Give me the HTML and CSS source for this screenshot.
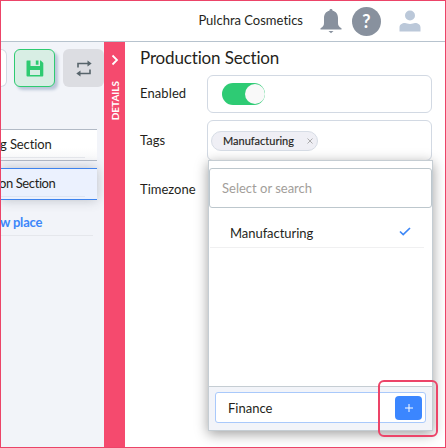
FILE: index.html
```html
<!DOCTYPE html>
<html lang="en">
<head>
    <meta charset="UTF-8">
    <meta name="viewport" content="width=device-width, initial-scale=1.0">
    <title>Production Section</title>
    <link rel="stylesheet" href="styles.css">
</head>
<body>
    <div class="app">
        <div class="header">
            <span class="company">Pulchra Cosmetics</span>
            <svg class="bell" width="22" height="26" viewBox="0 0 22 26">
                <path d="M11 1c1 0 1.600.700 1.600 1.700C16 3.400 18 6.200 18 10v5c0 2.600 1 3.800 3.500 5.200V21.500H.5v-1.300C3 18.800 4 17.600 4 15v-5C4 6.200 6 3.400 9.400 2.700 9.400 1.700 10 1 11 1z"/>
                <path d="M8.500 23h5L11 25.300z"/>
            </svg>
            <span class="help">?</span>
            <svg class="user" width="22" height="22" viewBox="0 0 22 22">
                <circle cx="11" cy="5.500" r="5"/>
                <path d="M.5 21.500v-4c0-3 2.500-4.500 5.500-4.500 1.500 0 2.500 1 5 1s3.500-1 5-1c3 0 5.500 1.500 5.500 4.500v4z"/>
            </svg>
        </div>
        <div class="main">
            <div class="sidebar">
                <div class="toolbar">
                    <div class="tool-edge"></div>
                    <button class="tool save">
                        <svg width="18" height="17" viewBox="0 0 18 17">
                            <path fill-rule="evenodd" d="M1 .5h3.500V6H14V.5h.8L17.300 3v12.500q0 1-1 1H1.500q-1 0-1-1V1.500q0-1 .5-1zM4 10v5h10v-5zM9.800 .5h2.700v4.200H9.800z"/>
                        </svg>
                    </button>
                    <button class="tool swap">
                        <svg width="16" height="17" viewBox="0 0 16 17">
                            <path class="line" d="M2 7.500V3.500h10.500M14 9.500v4H3.500"/>
                            <path d="M11.500 .5l4.200 3-4.200 3zM4.500 10.500l-4.200 3 4.200 3z"/>
                        </svg>
                    </button>
                </div>
                <div class="places">
                    <div class="place"><span>g Section</span></div>
                    <div class="place active"><span>on Section</span></div>
                    <div class="place new"><span>w place</span></div>
                </div>
            </div>
            <div class="details">
                <svg width="8" height="12" viewBox="0 0 8 12"><path d="M1.500 1.500L6 6l-4.500 4.500"/></svg>
                <span>DETAILS</span>
            </div>
            <div class="panel">
                <h2>Production Section</h2>
                <div class="field enabled">
                    <label>Enabled</label>
                    <div class="box"><div class="toggle"><div class="knob"></div></div></div>
                </div>
                <div class="field tags">
                    <label>Tags</label>
                    <div class="box">
                        <div class="tag">
                            <span>Manufacturing</span>
                            <svg width="6" height="6" viewBox="0 0 6 6"><path d="M.5 .5l5 5M5.500 .5l-5 5"/></svg>
                        </div>
                    </div>
                    <div class="dropdown">
                        <div class="search"><span>Select or search</span></div>
                        <div class="option">
                            <span>Manufacturing</span>
                            <svg width="12" height="9" viewBox="0 0 12 9"><path d="M1 4.500l3.200 3L11 1"/></svg>
                        </div>
                        <div class="add-bar">
                            <div class="add-input">
                                <span>Finance</span>
                                <button class="add">
                                    <svg width="8" height="8" viewBox="0 0 8 8"><path d="M4 0v8M0 4h8"/></svg>
                                </button>
                            </div>
                        </div>
                        <div class="highlight"></div>
                    </div>
                </div>
                <div class="field timezone">
                    <label>Timezone</label>
                </div>
            </div>
        </div>
    </div>
</body>
</html>
```
FILE: styles.css
```css
* {
    box-sizing: border-box;
}
body {
    margin: 0;
    font-family: Lato, sans-serif;
    font-size: 13px;
    font-variant-ligatures: none;
    color: #251f1b;
    background: white;
}
svg {
    display: block;
    flex: none;
}
button {
    padding: 0;
    border: none;
}
.app {
    display: flex;
    flex-direction: column;
    width: 446px;
    height: 448px;
    border: 1px solid #ec4468;
    overflow: hidden;
}
.header {
    display: flex;
    flex: none;
    align-items: center;
    justify-content: flex-end;
    height: 41px;
    padding-right: 24px;
    border-bottom: 1px solid #b7c3ce;
}
.company {
    margin: 0 17px 2px 0;
}
.bell {
    margin-right: 10px;
    fill: #88919e;
}
.help {
    width: 29px;
    height: 29px;
    margin-right: 18px;
    border-radius: 50%;
    background: #88919e;
    color: white;
    font-size: 18px;
    font-weight: bold;
    line-height: 29px;
    text-align: center;
}
.user {
    fill: #bbc8d9;
}
.main {
    display: flex;
    flex: 1;
}
.sidebar {
    width: 103px;
    background: #f2f4f9;
    overflow: hidden;
}
.toolbar {
    display: flex;
    padding-top: 7px;
}
.tool-edge {
    width: 6px;
    height: 38px;
    margin-right: 7px;
    border: 1px solid #d3d9e3;
    border-left: none;
    border-radius: 0 6px 6px 0;
    background: white;
}
.tool {
    display: flex;
    align-items: center;
    justify-content: center;
    width: 41px;
    height: 38px;
    border-radius: 6px;
}
.save {
    margin-right: 8px;
    border: 1px solid #2ecb71;
    background: #d8eee4;
    box-shadow: 3px 3px 3px #bac6d8;
    fill: #2ecb71;
}
.swap {
    background: #dcdde2;
    fill: #57646b;
}
.swap .line {
    fill: none;
    stroke: #57646b;
    stroke-width: 1.6;
}
.places {
    width: 96px;
    margin-top: 42px;
}
.place {
    height: 32px;
    margin-bottom: 7px;
    border: 1px solid #b2bac6;
    border-width: 1px 0;
    background: linear-gradient(white 60%, #f6f7f9);
    line-height: 28px;
    white-space: nowrap;
}
.place span {
    display: block;
    width: 84px;
    height: 28px;
    border-bottom: 1px solid #e5e7ec;
    letter-spacing: -0.1px;
    text-indent: -1px;
}
.place.active {
    position: relative;
    border-color: #3d83ee;
    background: #ebf1fe;
    box-shadow: 0 0 12px rgba(60, 70, 90, 0.3);
}
.place.active span {
    border-color: #dfe5f1;
    letter-spacing: -0.4px;
    text-indent: -2px;
}
.place.new {
    border-color: transparent;
    background: none;
    color: #3d87fa;
    font-weight: bold;
}
.place.new span {
    width: 92px;
    letter-spacing: -0.2px;
}
.details {
    display: flex;
    flex-direction: column;
    align-items: center;
    width: 21px;
    padding-top: 12px;
    background: #f54a6e;
    color: white;
}
.details svg {
    fill: none;
    stroke: white;
    stroke-width: 1.8;
}
.details span {
    margin-top: 15px;
    font-size: 10px;
    font-weight: bold;
    line-height: 12px;
    writing-mode: vertical-rl;
    transform: rotate(180deg);
}
.panel {
    flex: 1;
    padding: 4px 13px 0 15px;
}
.panel h2 {
    height: 29px;
    margin: 0;
    font-size: 17px;
    font-weight: normal;
    letter-spacing: -0.15px;
    line-height: 23px;
}
.field {
    position: relative;
    display: flex;
}
.field label {
    width: 67px;
    line-height: 36px;
}
.enabled label {
    letter-spacing: 0.1px;
}
.box {
    display: flex;
    align-items: center;
    width: 225px;
    border: 1px solid #d2d9e3;
    border-radius: 6px;
}
.enabled {
    height: 38px;
    margin-bottom: 7px;
}
.toggle {
    width: 43px;
    height: 22px;
    margin-left: 14px;
    padding: 1px 0.5px;
    border-radius: 11px;
    background: #2ecb74;
}
.knob {
    width: 20px;
    height: 20px;
    margin-left: auto;
    border-radius: 50%;
    background: #f9f9f9;
}
.tags {
    height: 41px;
    margin-bottom: 9px;
}
.tags label {
    line-height: 40px;
}
.timezone label {
    line-height: 38px;
}
.tag {
    display: flex;
    align-items: center;
    justify-content: space-between;
    width: 107px;
    height: 20px;
    margin-left: 3px;
    padding: 0 4px 0 11px;
    border: 1px solid #d7dde6;
    border-radius: 10px;
    background: #efeff5;
    font-size: 11px;
    -webkit-text-stroke: 0.15px;
}
.tag svg {
    fill: none;
    stroke: #999;
    stroke-width: 0.8;
}
.dropdown {
    position: absolute;
    top: 40px;
    left: 68px;
    display: flex;
    flex-direction: column;
    width: 225px;
    height: 271px;
    border: 1px solid #c5cdd3;
    background: white;
    box-shadow: 0 3px 12px rgba(0, 0, 0, 0.38);
}
.search {
    height: 40px;
    margin: 7px 0 0;
    padding-left: 12px;
    border: 1px solid #bdc7cd;
    border-radius: 3px;
    color: #a29e9a;
    line-height: 38px;
}
.option {
    display: flex;
    align-items: center;
    justify-content: space-between;
    height: 40px;
    margin: 0 8px 0 1px;
    padding: 10px 13px 0 20px;
    border-bottom: 1px solid #f0f0f1;
}
.option span {
    letter-spacing: -0.05px;
}
.option svg {
    margin-bottom: 3px;
    fill: none;
    stroke: #3d87f7;
    stroke-width: 1.7;
}
.add-bar {
    height: 44px;
    margin-top: auto;
    padding: 5px 6px;
    border-top: 1px solid #c5cdd3;
    background: #f2f4f9;
}
.add-input {
    display: flex;
    align-items: center;
    justify-content: space-between;
    height: 31px;
    padding: 0 3px 0 12px;
    border: 1px solid #a9c9fb;
    border-radius: 3px;
    background: white;
}
.add {
    display: flex;
    align-items: center;
    justify-content: center;
    width: 27px;
    height: 24px;
    border-radius: 4px;
    background: #3b86ff;
}
.add svg {
    stroke: white;
}
.highlight {
    position: absolute;
    right: -6px;
    bottom: -7px;
    width: 60px;
    height: 57px;
    border: 2px solid #ec4468;
    border-radius: 6px;
}
```
